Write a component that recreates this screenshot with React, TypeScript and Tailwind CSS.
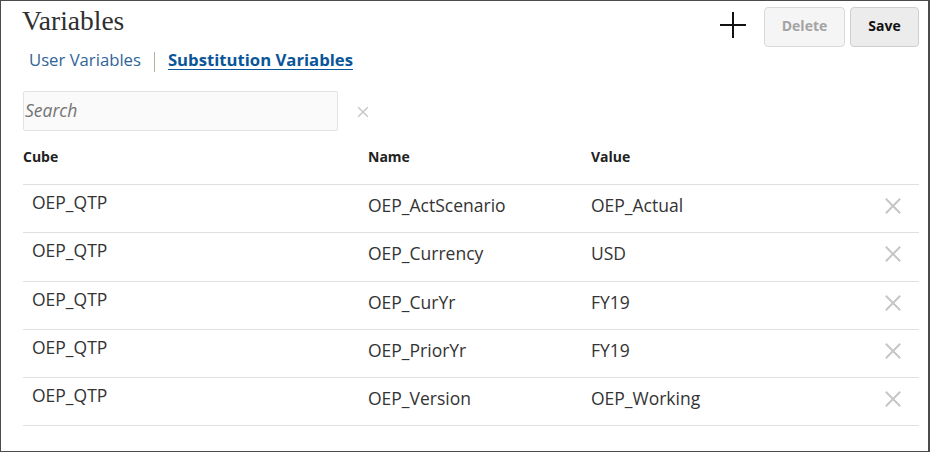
import React from "react";

const rows = [
  { cube: "OEP_QTP", name: "OEP_ActScenario", value: "OEP_Actual" },
  { cube: "OEP_QTP", name: "OEP_Currency", value: "USD" },
  { cube: "OEP_QTP", name: "OEP_CurYr", value: "FY19" },
  { cube: "OEP_QTP", name: "OEP_PriorYr", value: "FY19" },
  { cube: "OEP_QTP", name: "OEP_Version", value: "OEP_Working" },
];

function XIcon({ size, stroke, color }: { size: number; stroke: number; color: string }) {
  return (
    <svg width={size} height={size} viewBox="0 0 20 20" fill="none">
      <path d="M2 2 L18 18 M18 2 L2 18" stroke={color} strokeWidth={stroke} strokeLinecap="butt" />
    </svg>
  );
}

export default function App() {
  const sans = { fontFamily: '"Open Sans", "Noto Sans", Arial, sans-serif' };
  return (
    <div
      className="w-[930px] h-[452px] box-border border border-r-2 border-[#4b4b4b] bg-white pl-[22px] pr-[9px] pt-[5px] text-[#333333] overflow-hidden"
      style={sans}
    >
      {/* Header */}
      <div className="flex items-start justify-between">
        <h1
          className="text-[27.5px] leading-[30px] text-[#2f2f2f] font-normal -ml-[1px]"
          style={{ fontFamily: '"Liberation Serif", "Times New Roman", serif' }}
        >
          Variables
        </h1>
        <div className="flex items-start mt-[1px]">
          <svg width="26" height="26" viewBox="0 0 26 26" className="mr-[18px] mt-[5px]">
            <path d="M13 0 V26 M0 13 H26" stroke="#111" strokeWidth="2" />
          </svg>
          <button className="w-[81px] h-[40px] pb-[3px] rounded-[4px] border border-[#d9d9d9] bg-[#f5f5f5] text-[14px] font-bold text-[#a3a3a3]">
            Delete
          </button>
          <button className="ml-[5px] w-[69px] h-[40px] pb-[3px] rounded-[4px] border border-[#cfcfcf] bg-[#ececec] text-[14px] font-bold text-[#111]">
            Save
          </button>
        </div>
      </div>

      {/* Tabs */}
      <div className="flex items-center pl-[6px] mt-[1px] h-[24px] text-[16.7px] leading-[24px]">
        <span className="text-[#2f6496]">User Variables</span>
        <span className="ml-[13px] mt-[4px] w-px h-[20px] bg-[#b9b19f]" />
        <span className="ml-[13px] font-bold text-[#0a5699] underline underline-offset-[3px] decoration-1">
          Substitution Variables
        </span>
      </div>

      {/* Search */}
      <div className="flex items-center mt-[19px]">
        <div className="w-[315px] h-[40px] box-border border border-[#e3e3e3] rounded-[2px] bg-[#fafafa] flex items-center pl-[1px]">
          <span className="italic text-[17.5px] text-[#737373] leading-[24px] -mt-[3px]">Search</span>
        </div>
        <div className="ml-[19px] mt-[1px]">
          <XIcon size={12} stroke={2.6} color="#c9c9c9" />
        </div>
      </div>

      {/* Table */}
      <div>
        <div className="grid grid-cols-[345px_223px_1fr] pt-[16px] pb-[17px] border-b border-[#e0e0e0] text-[14px] leading-[20px] font-bold text-[#222]">
          <div>Cube</div>
          <div>Name</div>
          <div>Value</div>
        </div>
        {rows.map((r, i) => (
          <div
            key={i}
            className="grid grid-cols-[345px_223px_1fr_auto] h-[48.25px] box-border border-b border-[#e0e0e0] text-[17.5px] leading-[24px]"
          >
            <div className="pl-[9px] pt-[5px]">{r.cube}</div>
            <div className="pt-[8px]">{r.name}</div>
            <div className="pt-[8px]">{r.value}</div>
            <div className="pt-[12px] pr-[17px]">
              <XIcon size={18} stroke={2.2} color="#c6c6c6" />
            </div>
          </div>
        ))}
      </div>
    </div>
  );
}
